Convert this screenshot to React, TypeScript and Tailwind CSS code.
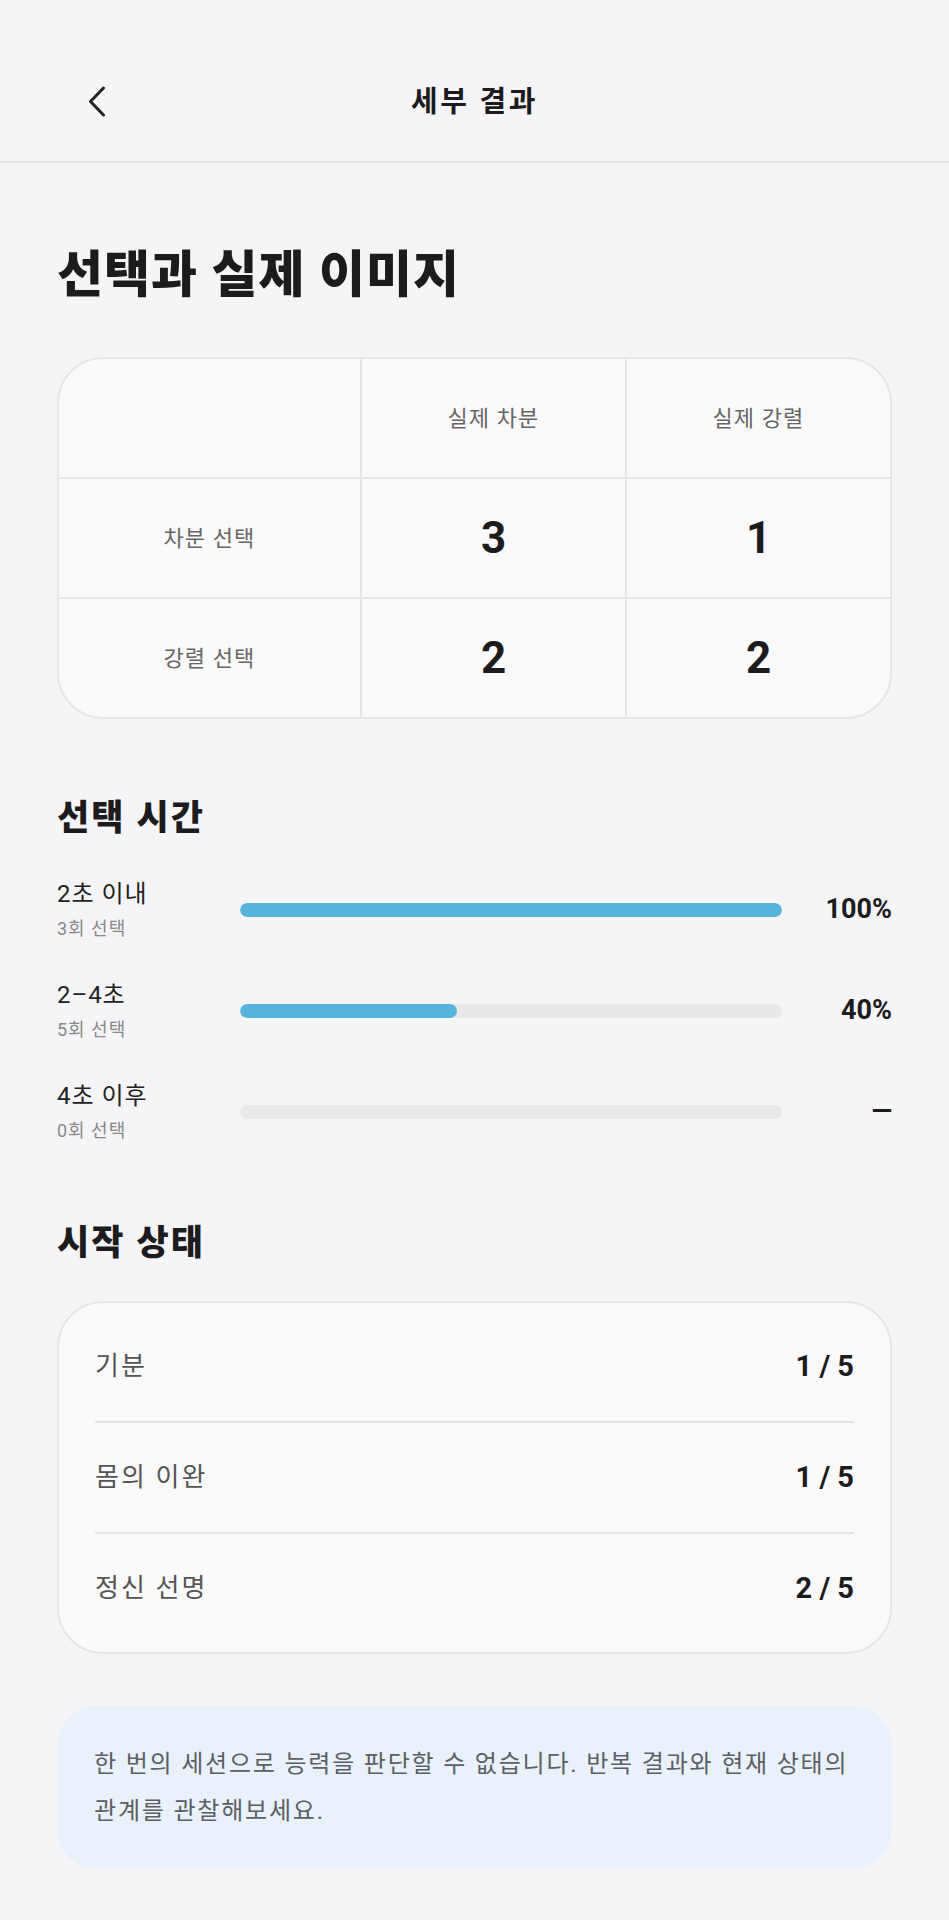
import React from "react";

const rows = [
  { label: "2초 이내", sub: "3회 선택", pct: 100, value: "100%" },
  { label: "2–4초", sub: "5회 선택", pct: 40, value: "40%" },
  { label: "4초 이후", sub: "0회 선택", pct: 0, value: "—" },
];

const states = [
  { label: "기분", value: "1 / 5" },
  { label: "몸의 이완", value: "1 / 5" },
  { label: "정신 선명", value: "2 / 5" },
];

export default function App() {
  return (
    <div className="min-h-screen bg-[#f5f5f7] font-['Roboto','Noto_Sans_CJK_KR',sans-serif] text-[#1c1c1e]">
      <header className="h-[163px] border-b-2 border-[#e3e3e6] pt-[42px] px-[88px] flex items-center">
        <div className="w-[40px] flex items-center">
          <svg width="18" height="31" viewBox="0 0 18 31" fill="none">
            <polyline points="15.5,2 2.5,15.5 15.5,29" stroke="#222" strokeWidth="3" strokeLinecap="round" strokeLinejoin="round" />
          </svg>
        </div>
        <div className="flex-1 text-center text-[29px] font-bold leading-[40px] tracking-[0.09em]">세부 결과</div>
        <div className="w-[40px]" />
      </header>

      <main className="px-[57px] pb-[52px]">
        <h1 className="mt-[81px] text-[50px] leading-[62px] font-extrabold tracking-[0.02em]">선택과 실제 이미지</h1>

        <div className="mt-[51px] rounded-[46px] border-2 border-[#e6e6e8] bg-[#fafafa] overflow-hidden">
          <div className="grid grid-cols-[301px_265px_1fr] h-[118px]">
            <div />
            <div className="border-l-2 border-[#e6e6e8] flex items-center justify-center text-[22px] tracking-[0.05em] text-[#666]">실제 차분</div>
            <div className="border-l-2 border-[#e6e6e8] flex items-center justify-center text-[22px] tracking-[0.05em] text-[#666]">실제 강렬</div>
          </div>
          <div className="grid grid-cols-[301px_265px_1fr] h-[120px] border-t-2 border-[#e6e6e8]">
            <div className="flex items-center justify-center text-[22px] tracking-[0.05em] text-[#666]">차분 선택</div>
            <div className="border-l-2 border-[#e6e6e8] flex items-center justify-center text-[44px] font-bold">3</div>
            <div className="border-l-2 border-[#e6e6e8] flex items-center justify-center text-[44px] font-bold">1</div>
          </div>
          <div className="grid grid-cols-[301px_265px_1fr] h-[120px] border-t-2 border-[#e6e6e8]">
            <div className="flex items-center justify-center text-[22px] tracking-[0.05em] text-[#666]">강렬 선택</div>
            <div className="border-l-2 border-[#e6e6e8] flex items-center justify-center text-[44px] font-bold">2</div>
            <div className="border-l-2 border-[#e6e6e8] flex items-center justify-center text-[44px] font-bold">2</div>
          </div>
        </div>

        <h2 className="mt-[77px] text-[35px] leading-[46px] font-extrabold tracking-[0.06em]">선택 시간</h2>
        <div className="mt-[36px] flex flex-col gap-[38px]">
          {rows.map((r) => (
            <div key={r.label} className="flex items-center h-[63px]">
              <div className="w-[183px] flex flex-col gap-[7px]">
                <div className="text-[24px] leading-[32px] tracking-[0.04em] text-[#222]">{r.label}</div>
                <div className="text-[18px] leading-[24px] tracking-[0.055em] text-[#888]">{r.sub}</div>
              </div>
              <div className="flex-1 h-[14px] rounded-full bg-[#e8e8ea] overflow-hidden">
                <div className="h-full rounded-full bg-[#56b4da]" style={{ width: `${r.pct}%` }} />
              </div>
              <div className="w-[110px] text-right text-[27px] font-bold">{r.value}</div>
            </div>
          ))}
        </div>

        <h2 className="mt-[78px] text-[35px] leading-[46px] font-extrabold tracking-[0.06em]">시작 상태</h2>
        <div className="mt-[34px] rounded-[46px] border-2 border-[#e6e6e8] bg-[#fafafa] px-[36px] py-[9px]">
          {states.map((s, i) => (
            <div
              key={s.label}
              className={
                i === 0
                  ? "h-[109px] flex items-center justify-between"
                  : "h-[111px] border-t-2 border-[#e3e3e5] flex items-center justify-between"
              }
            >
              <span className="text-[26px] tracking-[0.08em] text-[#555]">{s.label}</span>
              <span className="text-[29px] font-bold">{s.value}</span>
            </div>
          ))}
        </div>

        <div className="mt-[52px] rounded-[40px] bg-[#e9f1fa] px-[37px] py-[35px] text-[24px] leading-[46.7px] tracking-[0.075em] text-[#5b5f66]">
          한 번의 세션으로 능력을 판단할 수 없습니다. 반복 결과와 현재 상태의 관계를 관찰해보세요.
        </div>
      </main>
    </div>
  );
}
